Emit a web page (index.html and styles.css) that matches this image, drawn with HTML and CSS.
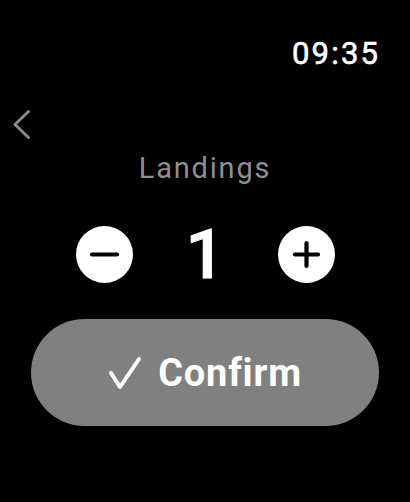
FILE: index.html
```html
<!DOCTYPE html>
<html>
<head>
<meta charset="utf-8">
<link rel="stylesheet" href="styles.css">
</head>
<body>
<div class="screen">
  <div class="status"><span class="time">09:35</span></div>
  <div class="nav">
    <svg class="back" width="20" height="32" viewBox="0 0 20 32">
      <polyline points="16.5,3.5 3,16.5 16.5,29.5" fill="none" stroke="#8a8a8e" stroke-width="3" stroke-linecap="round" stroke-linejoin="round"/>
    </svg>
  </div>
  <div class="title">Landings</div>
  <div class="stepper">
    <svg class="round" width="57" height="57" viewBox="0 0 57 57">
      <circle cx="28.5" cy="28.5" r="28.5" fill="#fff"/>
      <line x1="16" y1="28.5" x2="41" y2="28.5" stroke="#000" stroke-width="4.2" stroke-linecap="round"/>
    </svg>
    <div class="value">1</div>
    <svg class="round" width="57" height="57" viewBox="0 0 57 57">
      <circle cx="28.5" cy="28.5" r="28.5" fill="#fff"/>
      <line x1="17" y1="28.5" x2="40" y2="28.5" stroke="#000" stroke-width="4.2" stroke-linecap="round"/>
      <line x1="28.5" y1="17" x2="28.5" y2="40" stroke="#000" stroke-width="4.2" stroke-linecap="round"/>
    </svg>
  </div>
  <div class="confirm">
    <svg class="check" width="34" height="34" viewBox="0 0 34 34">
      <polyline points="3,16 12,30 31,2" fill="none" stroke="#fff" stroke-width="4" stroke-linecap="round" stroke-linejoin="round"/>
    </svg>
    <span class="label">Confirm</span>
  </div>
</div>
</body>
</html>
```
FILE: styles.css
```css
html, body {
  margin: 0;
  padding: 0;
  background: #000;
}
.screen {
  width: 410px;
  height: 502px;
  background: #000;
  font-family: Roboto, "Liberation Sans", sans-serif;
  color: #fff;
  display: flex;
  flex-direction: column;
  overflow: hidden;
}
.status {
  padding: 36px 32px 0 0;
  display: flex;
  justify-content: flex-end;
}
.time {
  font-size: 31px;
  line-height: 36px;
  letter-spacing: 2.2px;
  margin-right: -2.2px;
  font-weight: 400;
  -webkit-text-stroke: 0.6px #fff;
}
.nav {
  margin-top: 36px;
  padding-left: 12px;
  height: 32px;
}
.back {
  display: block;
}
.title {
  margin-top: 11px;
  text-align: center;
  font-size: 29px;
  line-height: 34px;
  color: #8e8e93;
  letter-spacing: 1.8px;
}
.stepper {
  margin-top: 41px;
  display: grid;
  grid-template-columns: 57px 145px 57px;
  justify-content: center;
  align-items: center;
}
.round {
  display: block;
}
.value {
  text-align: center;
  font-size: 69px;
  line-height: 57px;
  font-weight: 500;
  -webkit-text-stroke: 1px #fff;
}
.confirm {
  margin: 36px 31px 0 31px;
  height: 107px;
  border-radius: 54px;
  background: #808080;
  display: flex;
  align-items: center;
  justify-content: center;
  gap: 16px;
}
.check {
  display: block;
  margin-top: 2px;
}
.label {
  font-size: 38px;
  font-weight: 700;
  line-height: 44px;
  letter-spacing: 0.8px;
}
```
